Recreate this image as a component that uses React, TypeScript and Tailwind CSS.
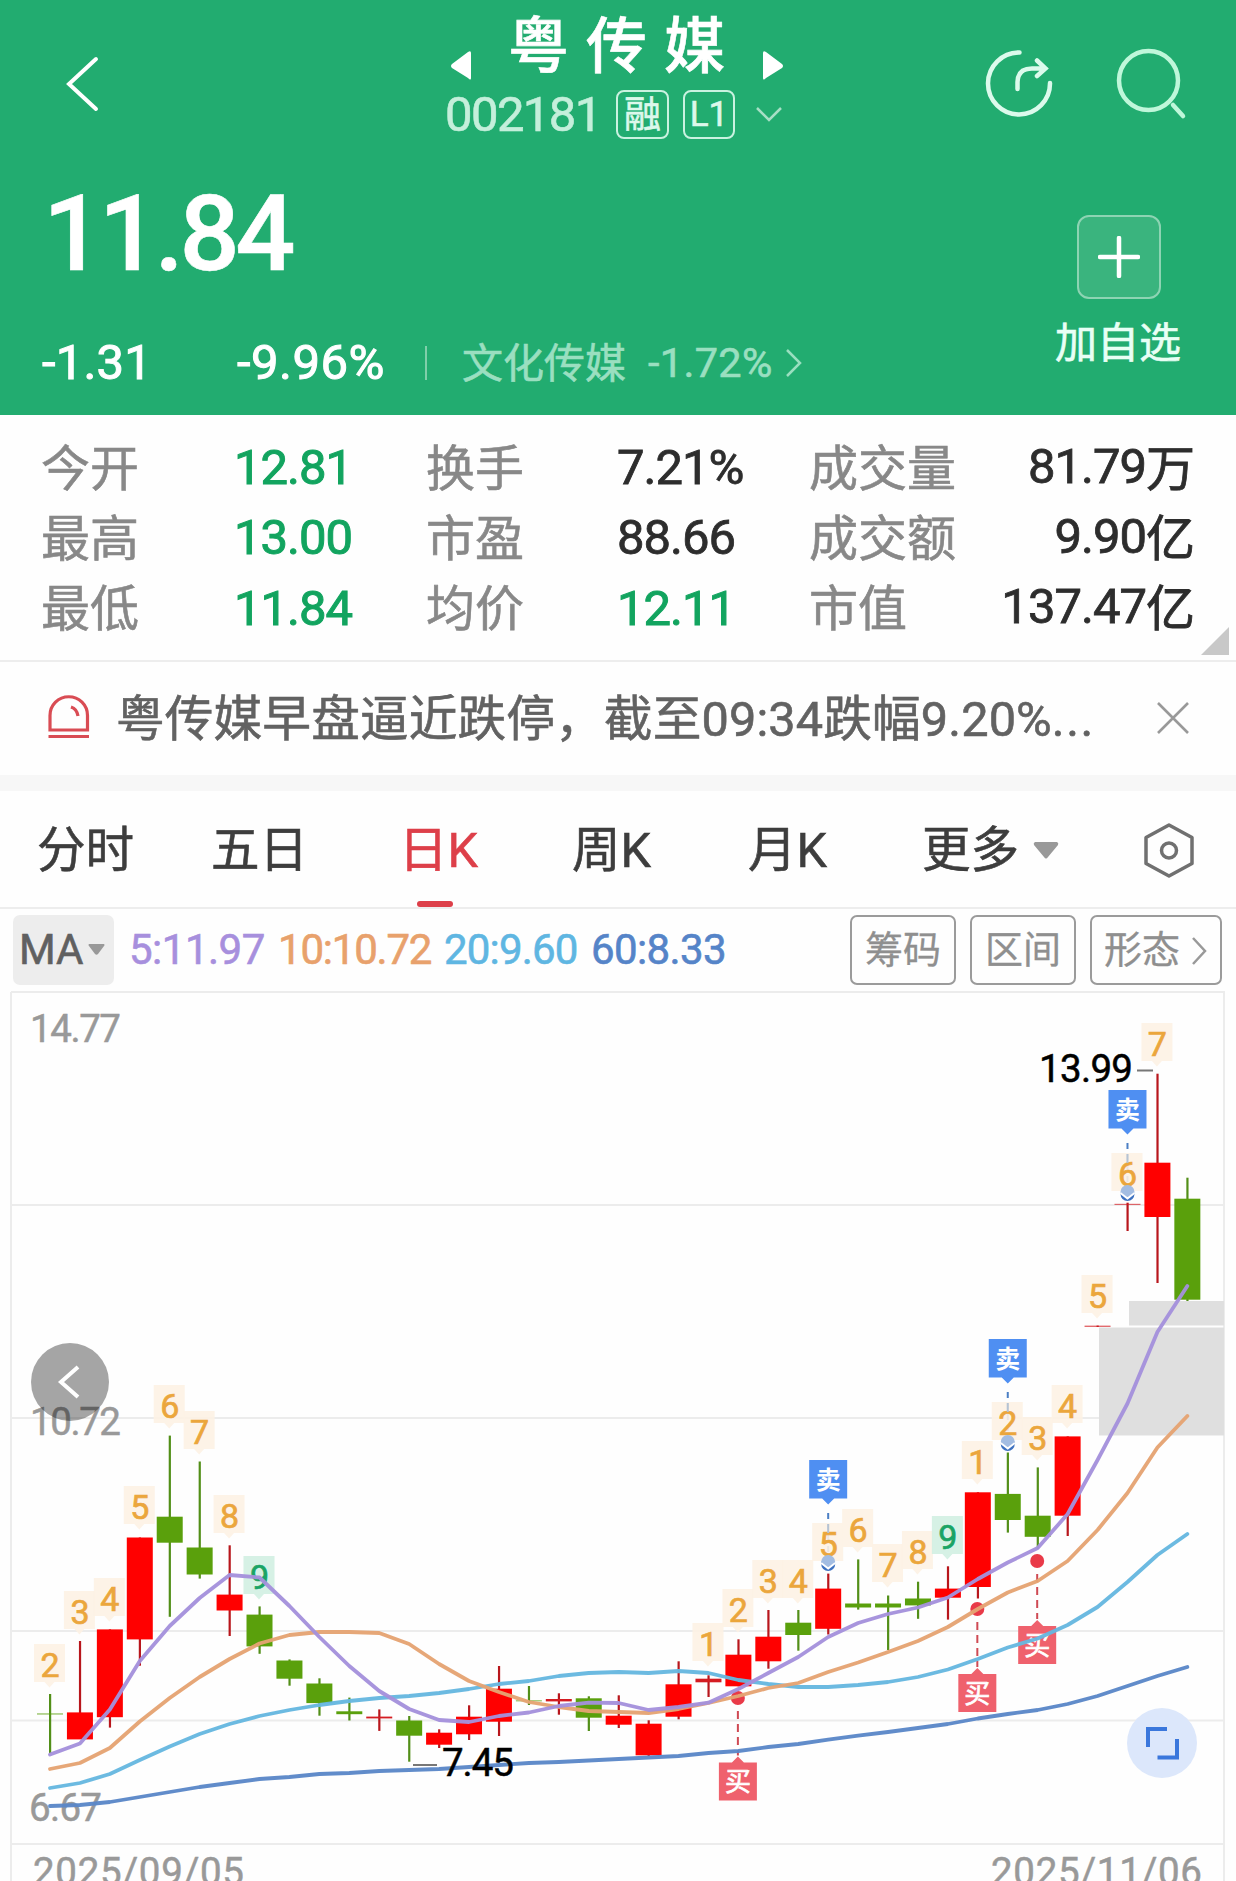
import React from 'react';

interface Candle {
  up: boolean;
  body: [number, number];
  wick: [number, number];
}

interface Tag {
  i: number;
  top: number;
  n: number;
}

const stats = [
  ['今开', '12.81', '换手', '7.21%', '成交量', '81.79', '万'],
  ['最高', '13.00', '市盈', '88.66', '成交额', '9.90', '亿'],
  ['最低', '11.84', '均价', '12.11', '市值', '137.47', '亿'],
];

const tabs = [
  { label: '分时', className: 'ml-[37px] w-[174px]' },
  { label: '五日', className: 'w-[188px]' },
  { label: '日K', className: 'w-[173px] text-[#dd3f49]' },
  { label: '周K', className: 'w-[176px]' },
  { label: '月K', className: 'w-[174px]' },
  { label: '更多', className: 'w-[111px]' },
];

// chart coordinates start at the top of the price panel
const TOP = 990;
const STEP = 29.93;
const cx = (i: number) => 50 + i * STEP;

const c = (up: number, b0: number, b1: number, w0: number, w1: number): Candle => ({
  up: up === 1,
  body: [b0, b1],
  wick: [w0, w1],
});

const candles: Candle[] = [
  c(0, 1713.3, 1714.6, 1694, 1753),
  c(1, 1712.4, 1739.4, 1641, 1739),
  c(1, 1629.4, 1717.2, 1629.4, 1727.6),
  c(1, 1537.5, 1639.4, 1537.5, 1665.7),
  c(0, 1516.7, 1542.7, 1435.6, 1616.8),
  c(0, 1547.5, 1574.5, 1461.5, 1578.6),
  c(1, 1594.6, 1610.5, 1545.3, 1636),
  c(0, 1614.6, 1646.4, 1606.4, 1653.8),
  c(0, 1660.5, 1678.7, 1659.4, 1685.7),
  c(0, 1683.5, 1703.1, 1678.3, 1715.7),
  c(0, 1711.3, 1714.2, 1697.6, 1720.5),
  c(1, 1716.6, 1718.4, 1709.4, 1730.9),
  c(0, 1720.5, 1735.7, 1716, 1761.7),
  c(1, 1732.7, 1744.7, 1729.3, 1748),
  c(1, 1716.7, 1734.3, 1705.3, 1740),
  c(1, 1688.7, 1721.7, 1666, 1736),
  c(0, 1700.2, 1701.4, 1686, 1705),
  c(1, 1699, 1701.4, 1693.3, 1714.7),
  c(0, 1698.3, 1717.7, 1696.3, 1731),
  c(1, 1715.7, 1724.7, 1695.3, 1728),
  c(1, 1723.7, 1755.3, 1720.3, 1756),
  c(1, 1684.3, 1716.7, 1661.3, 1719.3),
  c(1, 1678.7, 1682.3, 1675.3, 1697),
  c(1, 1654.7, 1686.3, 1639.3, 1686.3),
  c(1, 1636.7, 1661.3, 1610, 1668.7),
  c(0, 1622.7, 1635, 1610, 1650.7),
  c(1, 1588.6, 1628.8, 1573.6, 1634.5),
  c(0, 1603.5, 1607.5, 1559.4, 1609.6),
  c(0, 1603.5, 1607.5, 1595.5, 1650),
  c(0, 1598.5, 1605.4, 1581.7, 1618.8),
  c(1, 1588.6, 1597.7, 1566.3, 1619.6),
  c(1, 1492.3, 1587, 1492.3, 1598.5),
  c(0, 1493.9, 1520, 1452.5, 1532.6),
  c(0, 1515.7, 1536.8, 1467.4, 1549),
  c(1, 1436.4, 1515.7, 1436.4, 1536),
  c(1, 1325.6, 1327, 1325.6, 1327),
  c(1, 1203.8, 1205, 1202.7, 1231),
  c(1, 1162.7, 1217, 1073.7, 1283),
  c(0, 1198.7, 1299.7, 1177.7, 1301),
];

const averages = [
  {
    color: '#5b87c8',
    ys: [1806, 1805, 1802, 1797, 1792, 1787, 1783, 1779, 1777, 1774, 1773, 1771, 1770, 1769, 1767, 1765, 1763, 1762, 1760.5, 1759, 1757.5, 1756, 1753, 1751, 1747, 1744, 1739.6, 1735.7, 1732, 1728, 1724, 1718.5, 1714, 1710, 1704, 1696, 1686, 1676, 1667],
  },
  {
    color: '#66b7e0',
    ys: [1788, 1783, 1774, 1760, 1746.5, 1734, 1724, 1716, 1710, 1705, 1701, 1698, 1696, 1693, 1689, 1684, 1681, 1676, 1673, 1672, 1673, 1671, 1673, 1680, 1684, 1687, 1687, 1685, 1682, 1677, 1669.5, 1659, 1647.5, 1638.5, 1625, 1607, 1582, 1555, 1534],
  },
  {
    color: '#e5a373',
    ys: [1769, 1763, 1748, 1721.5, 1698, 1677, 1659, 1643.5, 1635, 1632, 1632, 1633, 1644, 1664, 1681, 1692, 1702, 1707, 1711, 1712, 1713, 1709, 1703, 1696, 1688, 1683, 1672, 1662.5, 1652, 1641, 1627, 1609, 1592.5, 1581, 1561, 1530, 1493, 1447.5, 1416],
  },
  {
    color: '#a491dc',
    ys: [1754.5, 1743.5, 1709.5, 1661, 1626, 1598, 1575, 1577.5, 1606, 1637, 1666, 1691, 1709, 1720, 1722, 1716, 1712.5, 1706, 1702.7, 1703, 1710, 1707, 1702.7, 1689, 1673, 1657, 1637, 1623, 1614, 1607.5, 1597.5, 1579, 1562.5, 1548, 1514, 1460, 1403.5, 1332, 1286],
  },
];

const tags: Tag[] = [
  { i: 0, top: 1644, n: 2 },
  { i: 1, top: 1591, n: 3 },
  { i: 2, top: 1578, n: 4 },
  { i: 3, top: 1486, n: 5 },
  { i: 4, top: 1385, n: 6 },
  { i: 5, top: 1411, n: 7 },
  { i: 6, top: 1495, n: 8 },
  { i: 7, top: 1556, n: 9 },
  { i: 22, top: 1623, n: 1 },
  { i: 23, top: 1589, n: 2 },
  { i: 24, top: 1560, n: 3 },
  { i: 25, top: 1560, n: 4 },
  { i: 26, top: 1523, n: 5 },
  { i: 27, top: 1509, n: 6 },
  { i: 28, top: 1544, n: 7 },
  { i: 29, top: 1531, n: 8 },
  { i: 30, top: 1516, n: 9 },
  { i: 31, top: 1441, n: 1 },
  { i: 32, top: 1402, n: 2 },
  { i: 33, top: 1417, n: 3 },
  { i: 34, top: 1385, n: 4 },
  { i: 35, top: 1275, n: 5 },
  { i: 36, top: 1153, n: 6 },
  { i: 37, top: 1023, n: 7 },
];

const sells = [
  { i: 26, top: 1460, dot: 1564 },
  { i: 32, top: 1339, dot: 1444 },
  { i: 36, top: 1090, dot: 1194 },
];

const buys = [
  { i: 23, top: 1762.5, dot: 1698 },
  { i: 31, top: 1674, dot: 1609 },
  { i: 33, top: 1626, dot: 1561 },
];

const CountTag: React.FC<{ tag: Tag }> = ({ tag }) => {
  const x = cx(tag.i) - 0.5;
  const nine = tag.n === 9;
  const ink = nine ? '#1aa465' : '#eba63c';
  return (
    <g>
      <path
        d={`M${x - 15.5} ${tag.top}h31v38h-10.5l-5 5.5l-5-5.5h-10.5z`}
        fill={nine ? '#d2f0e2' : '#fdf2e4'}
        fillOpacity={0.9}
      />
      <text x={x + 0.5} y={tag.top + 33} textAnchor="middle" fontSize="34" fill={ink} stroke={ink} strokeWidth="0.7">
        {tag.n}
      </text>
    </g>
  );
};

const Chart = () => (
  <svg className="block h-[891px] w-[1236px]" viewBox={`0 ${TOP} 1236 891`} fontFamily="Roboto, 'Noto Sans CJK SC', sans-serif">
    <g stroke="#ececec" strokeWidth="2" fill="none">
      <path d="M11 992H1225M11 1205H1224M11 1418H1224M11 1631H1224M11 1720.5H1224M11 1844H1224" />
      <path d="M11 992V1881M1224 992V1881" />
    </g>
    <rect x="1129" y="1301" width="95" height="24.5" fill="#dfdfdf" />
    <rect x="1099" y="1327.5" width="125" height="108" fill="#dfdfdf" />

    <g fill="#999999" stroke="#999999" strokeWidth="0.5" fontSize="38.5">
      <text x="30" y="1042" textLength="91">14.77</text>
      <text x="30" y="1435" textLength="91">10.72</text>
      <text x="29" y="1821" textLength="73">6.67</text>
      <text x="33" y="1885" textLength="211">2025/09/05</text>
      <text x="991" y="1885" textLength="211">2025/11/06</text>
    </g>

    {sells.map((s) => {
      const x = cx(s.i);
      return (
        <g key={s.i}>
          <path d={`M${x} ${s.top + 53}V${s.dot - 5}`} stroke="#4c7fc4" strokeWidth="2" strokeDasharray="6 5" />
          <circle cx={x} cy={s.dot} r="7" fill="#3d71c0" />
          <path d={`M${x - 19} ${s.top}h38v38.500h-13l-6 6l-6-6h-13z`} fill="#4f8ff2" />
          <text x={x} y={s.top + 28.5} textAnchor="middle" fontSize="25" fontWeight="700" fill="#ffffff">卖</text>
        </g>
      );
    })}

    {candles.map((k, i) => {
      const x = cx(i);
      const flat = k.body[1] - k.body[0] < 1.6;
      return (
        <g key={i} fill={k.up ? '#ff0000' : '#5aa00c'}>
          <rect x={x - 1} y={k.wick[0]} width="2.2" height={k.wick[1] - k.wick[0]} fill={k.up ? '#b8161c' : '#528f18'} />
          <rect
            x={x - 13}
            y={k.body[0]}
            width="26"
            height={k.body[1] - k.body[0]}
            fillOpacity={flat ? 0.65 : 1}
            fill={k.up ? (k.body[1] - k.body[0] < 4 ? '#d41c22' : '#ff0000') : '#5aa00c'}
          />
        </g>
      );
    })}

    {tags.map((t) => (
      <CountTag key={t.i} tag={t} />
    ))}

    {sells.map((s) => {
      const x = cx(s.i);
      return (
        <g key={s.i}>
          <path d={`M${x - 7} ${s.dot - 2}a7 7 0 0 1 14 0l-7 6z`} fill="#a3bde2" />
          <path d={`M${x - 7} ${s.dot - 1}l7 5.500l7-5.500`} fill="none" stroke="#ffffff" strokeWidth="2" />
          <path d={`M${x} ${s.top + 64}v9`} stroke="#b5c3d3" strokeWidth="2" />
        </g>
      );
    })}

    {buys.map((b) => {
      const x = cx(b.i) - 0.5;
      return (
        <g key={b.i}>
          <circle cx={x} cy={b.dot} r="7" fill="#e93a48" />
          <path d={`M${x} ${b.dot + 13}V${b.top - 7}`} stroke="#cf4a54" strokeWidth="2" strokeDasharray="8 5" />
          <path d={`M${x - 19} ${b.top}h13l6-6l6 6h13v38h-38z`} fill="#ef616d" />
          <text x={x} y={b.top + 28.5} textAnchor="middle" fontSize="26" fill="#ffffff" stroke="#ffffff" strokeWidth="0.7">买</text>
        </g>
      );
    })}

    {averages.map((line) => (
      <polyline
        key={line.color}
        points={line.ys.map((y, i) => `${cx(i)},${y}`).join(' ')}
        fill="none"
        stroke={line.color}
        strokeOpacity="0.96"
        strokeWidth="3.8"
        strokeLinecap="round"
        strokeLinejoin="round"
      />
    ))}

    <path d="M413 1765h24M1137 1070.500h16" stroke="#777777" strokeWidth="1.800" />
    <g fill="#000000" stroke="#000000" strokeWidth="0.5" fontSize="38.5">
      <text x="442" y="1776" textLength="72">7.45</text>
      <text x="1039" y="1081.500" textLength="94">13.99</text>
    </g>

    <circle cx="70" cy="1382" r="39" fill="#000000" fillOpacity="0.35" />
    <path d="M78 1367L61 1382L78 1397" fill="none" stroke="#ffffff" strokeWidth="4" />
    <circle cx="1162" cy="1743" r="35" fill="#dce7fb" />
    <path d="M1148 1747V1729H1167M1177 1739V1757.500H1157.500" fill="none" stroke="#3a77dc" strokeWidth="4" />
  </svg>
);

const Header = () => (
  <header className="flex h-[415px] flex-col bg-[#22ac70] text-white">
    <div className="flex h-[150px]">
      <svg className="ml-[60px] mt-[50px] h-[70px] w-[50px]" viewBox="0 0 50 70" fill="none" stroke="white" strokeWidth="4" strokeLinecap="round">
        <path d="M36 9L9 34L36 59" />
      </svg>
      <div className="ml-[335px] flex w-[345px] flex-col">
        <div className="flex h-[88px] pl-[5px]">
          <svg className="mt-[50px] h-[32px] w-[22px]" viewBox="0 0 22 32" fill="white">
            <path d="M21 3V28Q21 31 18 28L2 18Q0 16 2 14L18 2Q21 0 21 3z" />
          </svg>
          <h1 className="ml-[36px] w-[254px] whitespace-nowrap pt-[3px] text-[61px] leading-[88px] tracking-[17px] font-medium">粤传媒</h1>
          <svg className="mt-[50px] h-[32px] w-[22px]" viewBox="0 0 22 32" fill="white">
            <path d="M1 3V28Q1 31 4 28L20 18Q22 16 20 14L4 2Q1 0 1 3z" />
          </svg>
        </div>
        <div className="flex h-[53px] items-center">
          <span className="w-[171px] text-[49px] tracking-[-1.6px] text-[#c4efdb]">002181</span>
          <span className="mr-[14px] flex h-[49px] w-[53px] items-center justify-center rounded-[8px] border-2 border-[#c9f2e0] pt-[2px] text-[37px] leading-none text-[#dcf8eb]">融</span>
          <span className="flex h-[49px] w-[52px] items-center justify-center rounded-[8px] border-2 border-[#c9f2e0] text-[35px] leading-none text-[#dcf8eb]">L1</span>
          <svg className="ml-[20px] h-[20px] w-[30px]" viewBox="0 0 30 20" fill="none" stroke="#a7dfc6" strokeWidth="2.5">
            <path d="M2 3L14 15L26 3" />
          </svg>
        </div>
      </div>
      <svg className="ml-[190px] mt-[45px] h-[76px] w-[76px]" viewBox="0 0 76 76" fill="none" stroke="#dcfaec" strokeWidth="4.5" strokeLinecap="round">
        <path d="M39.500 7.500A31 31 0 1 0 70 38" />
        <path d="M37.500 44V37Q38 23.500 52 23.500H65M57 15.500L65.500 23.500L57 31" />
      </svg>
      <svg className="ml-[49px] mt-[45px] h-[76px] w-[86px]" viewBox="0 0 86 76" fill="none" stroke="#bff7da" strokeWidth="4.5" strokeLinecap="round">
        <circle cx="43.500" cy="35.500" r="29.500" />
        <path d="M68 60L78 71" />
      </svg>
    </div>
    <div className="flex h-[265px]">
      <div className="flex w-[1055px] flex-col">
        <div className="h-[163px] pl-[43px] pt-[29px] text-[106px] font-medium leading-[110px] tracking-[-4.5px]">11.84</div>
        <div className="flex h-[100px] items-center whitespace-nowrap">
          <span className="ml-[42px] w-[195px] text-[49px] tracking-[0.2px] [-webkit-text-stroke:1px]">-1.31</span>
          <span className="w-[188px] text-[49px] tracking-[0.5px] [-webkit-text-stroke:1px]">-9.96%</span>
          <span className="h-[34px] w-[2px] bg-[#7fcfaa]" />
          <span className="ml-[35px] w-[186px] pt-[3px] text-[41px] text-[#9adfc0]">文化传媒</span>
          <span className="w-[138px] text-[41.5px] tracking-[0.3px] text-[#9adfc0]">-1.72%</span>
          <svg className="-ml-[2px] h-[34px] w-[20px]" viewBox="0 0 20 34" fill="none" stroke="#9adfc0" strokeWidth="2.5">
            <path d="M3 4L16 17L3 30" />
          </svg>
        </div>
      </div>
      <div className="flex flex-col items-center pt-[65px]">
        <button className="flex h-[84px] w-[84px] items-center justify-center rounded-[12px] border-2 border-[#8dd4b3] bg-[#3ab47e]">
          <svg className="h-[42px] w-[42px]" viewBox="0 0 42 42" stroke="white" strokeWidth="4.5" strokeLinecap="round">
            <path d="M21 2V40M2 21H40" />
          </svg>
        </button>
        <span className="mt-[15px] w-[127px] whitespace-nowrap text-[42px] leading-[60px] text-[#e8fff5]">加自选</span>
      </div>
    </div>
  </header>
);

const Stats = () => (
  <section className="relative h-[247px] border-b-2 border-[#ededed] pt-[18px] text-[49px]">
    {stats.map((row, r) => (
      <div key={row[0]} className="flex h-[70.3px] items-center whitespace-nowrap leading-[70px] tracking-[-1px] text-[#2d2d2d]">
        <span className="ml-[41px] w-[193px] pt-[3px] tracking-normal text-[#888888]">{row[0]}</span>
        <span className="w-[192px] text-[#12a45f] [-webkit-text-stroke:1px]">{row[1]}</span>
        <span className="w-[191px] pt-[3px] tracking-normal text-[#888888]">{row[2]}</span>
        <span className={r === 2 ? 'w-[192px] text-[#12a45f] [-webkit-text-stroke:1px]' : 'w-[192px] [-webkit-text-stroke:0.8px]'}>{row[3]}</span>
        <span className="w-[150px] pt-[3px] tracking-normal text-[#888888]">{row[4]}</span>
        <span className="flex w-[235px] justify-end [-webkit-text-stroke:0.8px]">
          {row[5]}
          <span className="pt-[3px]">{row[6]}</span>
        </span>
      </div>
    ))}
    <svg className="absolute bottom-[5px] right-[7px] h-[28px] w-[28px]" viewBox="0 0 28 28" fill="#c8c8c8">
      <path d="M28 0V28H0z" />
    </svg>
  </section>
);

const Notice = () => (
  <section className="flex h-[129px] items-center border-b-[16px] border-[#f7f7f7]">
    <svg className="ml-[46px] h-[50px] w-[46px]" viewBox="0 0 46 50" fill="none" stroke="#d94c54" strokeWidth="3.2">
      <path d="M4 36V21.500A18.500 18.500 0 0 1 41.500 21.500V36z" />
      <path d="M2.500 42.500H43M25 13Q31 15 32 22" />
    </svg>
    <span className="ml-[24px] w-[1039px] whitespace-nowrap pt-[3px] text-[48.7px] tracking-[0.1px] text-[#626262]">
      粤传媒早盘逼近跌停，截至09:34跌幅9.20%<span className="tracking-[1.5px]">...</span>
    </span>
    <svg className="h-[36px] w-[36px]" viewBox="0 0 36 36" stroke="#999999" strokeWidth="2.600">
      <path d="M3 2L33 32M33 2L3 32" />
    </svg>
  </section>
);

const Tabs = () => (
  <nav className="relative flex h-[118px] items-center whitespace-nowrap border-b-2 border-[#ededed] pt-[4px] text-[48.5px] text-[#3d3d3d]">
    {tabs.map((tab) => (
      <span key={tab.label} className={tab.className}>{tab.label}</span>
    ))}
    <svg className="h-[20px] w-[26px]" viewBox="0 0 26 20" fill="#999999">
      <path d="M2 1H24Q26 2 25 4L15 16Q13 19 11 16L1 4Q0 2 2 1z" />
    </svg>
    <svg className="ml-[82px] h-[60px] w-[56px]" viewBox="0 0 56 60" fill="none" stroke="#707070" strokeWidth="3.5" strokeLinejoin="round">
      <path d="M28 4L51 16.500V42.500L28 55L5 42.500V16.500z" />
      <circle cx="28" cy="29.500" r="7.500" />
    </svg>
    <span className="absolute bottom-0 left-[417px] h-[6px] w-[36px] rounded-full bg-[#dd3f49]" />
  </nav>
);

const Indicators = () => (
  <div className="flex h-[81px] items-center whitespace-nowrap text-[42px]">
    <span className="ml-[13px] flex h-[70px] w-[101px] items-center rounded-[7px] bg-[#ededed] pl-[6px] text-[#606060]">
      <span className="w-[69px]">MA</span>
      <svg className="h-[11px] w-[17px]" viewBox="0 0 17 11" fill="#999999">
        <path d="M1 0H16Q17 1 16 2L10 10Q8.500 11.500 7 10L1 2Q0 1 1 0z" />
      </svg>
    </span>
    <span className="ml-[15px] w-[149px] tracking-[-0.5px] text-[#a78fdd]">5:11.97</span>
    <span className="w-[166px] tracking-[-1.2px] text-[#e8a16c]">10:10.72</span>
    <span className="w-[147px] tracking-[-0.8px] text-[#5fb6e2]">20:9.60</span>
    <span className="w-[259px] tracking-[-0.6px] text-[#5584c8]">60:8.33</span>
    <div className="flex gap-[14px] text-[38px] text-[#8f8f8f] [-webkit-text-stroke:0.3px]">
      <span className="flex h-[70px] w-[106px] items-center justify-center rounded-[7px] border-2 border-[#9b9b9b] pt-[2px]">筹码</span>
      <span className="flex h-[70px] w-[106px] items-center justify-center rounded-[7px] border-2 border-[#9b9b9b] pt-[2px]">区间</span>
      <span className="flex h-[70px] w-[132px] items-center gap-[11px] rounded-[7px] border-2 border-[#9b9b9b] pl-[12px] pt-[2px]">
        形态
        <svg className="h-[30px] w-[17px]" viewBox="0 0 17 30" fill="none" stroke="#999999" strokeWidth="2.500">
          <path d="M2 2L14 15L2 28" />
        </svg>
      </span>
    </div>
  </div>
);

const App = () => {
  return (
    <div className="h-[1881px] w-[1236px] overflow-hidden bg-[#fefefe] font-[Roboto,'Noto_Sans_CJK_SC',sans-serif] [-webkit-text-stroke:0.6px]">
      <Header />
      <Stats />
      <Notice />
      <Tabs />
      <Indicators />
      <Chart />
    </div>
  );
};

export default App;
